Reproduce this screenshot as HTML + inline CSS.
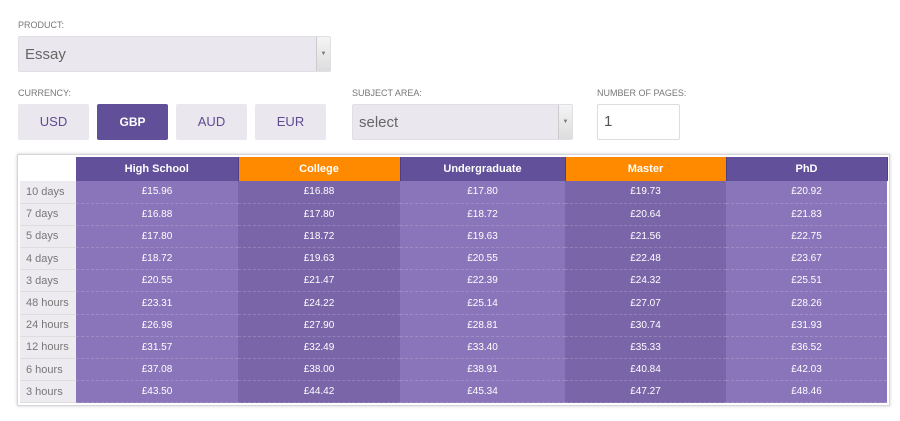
<!DOCTYPE html><html><head><style>
*{margin:0;padding:0;box-sizing:border-box}
body{width:900px;height:421px;background:#fff;font-family:"Liberation Sans",sans-serif;position:relative;overflow:hidden}
.lbl{position:absolute;font-size:9px;color:#777;letter-spacing:0}
.sel{position:absolute;background:#ebe7ee;border:1px solid #e2dee6;border-radius:2px;color:#666;font-size:15px;padding-left:6px}
.sel .arr{position:absolute;right:0;top:0;bottom:0;width:14px;border-left:1px solid #ccc;background:linear-gradient(#f4f4f4,#ddd);font-size:6px;color:#777;text-align:center}
.btn{position:absolute;top:104px;width:71px;height:36px;background:#ebe7ee;border-radius:2px;text-align:center;line-height:36px;font-size:13px;color:#5e4b92}
table{position:absolute;left:20px;top:157px;border-collapse:collapse;font-size:10px;color:#fff}
.wrap{position:absolute;left:17px;top:154px;width:873px;height:252px;border:1px solid #d8d4dc;box-shadow:0 0 3px #ccc}
td,th{height:22.2px;text-align:center;border-bottom:1px dashed rgba(255,255,255,.18);padding:0}
th{height:24px;background:#62509a;font-weight:bold;font-size:11px;border:none;border-right:1px solid #4e3f84}
th.o{background:#ff8a00}
th.e{background:#fff;border:none}
td.l{background:#eeebf0;color:#777;text-align:left;padding-left:6px;font-size:11px;border-bottom:1px solid #ddd;width:56px}
td.a{background:#8a75ba}
td.b{background:#7a65a9}
</style></head><body>
<div class="lbl" style="left:18px;top:20px">PRODUCT:</div>
<div class="sel" style="left:18px;top:36px;width:313px;height:36px;line-height:36px">Essay<div class="arr" style="line-height:34px">▼</div></div>
<div class="lbl" style="left:18px;top:88px">CURRENCY:</div>
<div class="btn" style="left:18px">USD</div>
<div class="btn" style="left:97px;background:#614f9a;color:#fff;font-weight:bold;font-size:12px">GBP</div>
<div class="btn" style="left:176px">AUD</div>
<div class="btn" style="left:255px">EUR</div>
<div class="lbl" style="left:352px;top:88px">SUBJECT AREA:</div>
<div class="sel" style="left:352px;top:104px;width:221px;height:36px;line-height:36px">select<div class="arr" style="line-height:34px">▼</div></div>
<div class="lbl" style="left:597px;top:88px">NUMBER OF PAGES:</div>
<div style="position:absolute;left:597px;top:104px;width:83px;height:36px;border:1px solid #ddd;border-radius:2px;font-size:15px;color:#555;line-height:34px;padding-left:6px">1</div>
<div class="wrap"></div>
<table>
<colgroup><col style="width:56px"><col style="width:162px"><col style="width:162px"><col style="width:165px"><col style="width:161px"><col style="width:161px"></colgroup>
<tr><th class="e"></th><th>High School</th><th class="o">College</th><th>Undergraduate</th><th class="o">Master</th><th>PhD</th></tr>
<tr><td class="l">10 days</td><td class="a">£15.96</td><td class="b">£16.88</td><td class="a">£17.80</td><td class="b">£19.73</td><td class="a">£20.92</td></tr>
<tr><td class="l">7 days</td><td class="a">£16.88</td><td class="b">£17.80</td><td class="a">£18.72</td><td class="b">£20.64</td><td class="a">£21.83</td></tr>
<tr><td class="l">5 days</td><td class="a">£17.80</td><td class="b">£18.72</td><td class="a">£19.63</td><td class="b">£21.56</td><td class="a">£22.75</td></tr>
<tr><td class="l">4 days</td><td class="a">£18.72</td><td class="b">£19.63</td><td class="a">£20.55</td><td class="b">£22.48</td><td class="a">£23.67</td></tr>
<tr><td class="l">3 days</td><td class="a">£20.55</td><td class="b">£21.47</td><td class="a">£22.39</td><td class="b">£24.32</td><td class="a">£25.51</td></tr>
<tr><td class="l">48 hours</td><td class="a">£23.31</td><td class="b">£24.22</td><td class="a">£25.14</td><td class="b">£27.07</td><td class="a">£28.26</td></tr>
<tr><td class="l">24 hours</td><td class="a">£26.98</td><td class="b">£27.90</td><td class="a">£28.81</td><td class="b">£30.74</td><td class="a">£31.93</td></tr>
<tr><td class="l">12 hours</td><td class="a">£31.57</td><td class="b">£32.49</td><td class="a">£33.40</td><td class="b">£35.33</td><td class="a">£36.52</td></tr>
<tr><td class="l">6 hours</td><td class="a">£37.08</td><td class="b">£38.00</td><td class="a">£38.91</td><td class="b">£40.84</td><td class="a">£42.03</td></tr>
<tr><td class="l">3 hours</td><td class="a">£43.50</td><td class="b">£44.42</td><td class="a">£45.34</td><td class="b">£47.27</td><td class="a">£48.46</td></tr>
</table>
</body></html>
